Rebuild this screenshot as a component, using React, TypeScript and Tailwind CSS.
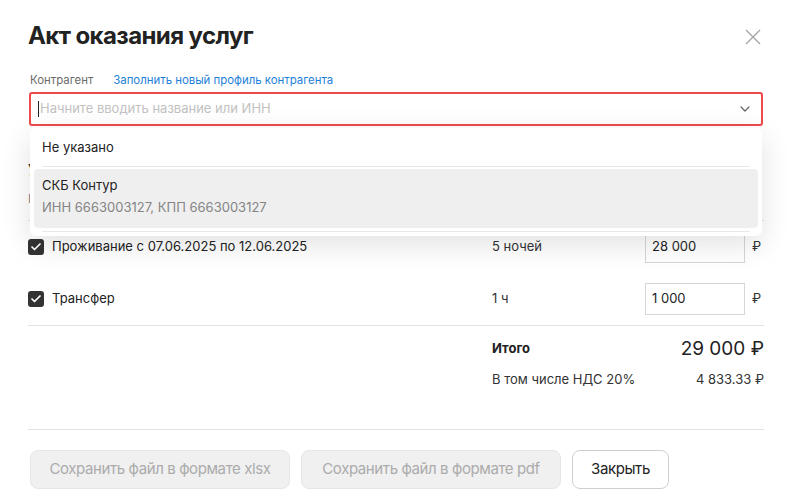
import { ChevronDown, Check } from "lucide-react";

function Checkbox() {
  return (
    <span className="w-4 h-4 rounded-[3px] bg-[#333] flex items-center justify-center shrink-0">
      <Check className="w-3 h-3 text-white" strokeWidth={3.5} />
    </span>
  );
}

function ServiceRow({ name, qty, price }: { name: string; qty: string; price: string }) {
  return (
    <div className="h-[52px] flex items-center">
      <div className="flex items-center gap-2 w-[464px] shrink-0">
        <Checkbox />
        <span className="text-[13px] text-[#222]">{name}</span>
      </div>
      <div className="w-[153px] shrink-0 text-[13px] text-[#333]">{qty}</div>
      <div className="w-[100px] h-[32px] shrink-0 border border-[#d6d6d6] flex items-center px-[6px] text-[13px] text-[#222] bg-white">
        {price}
      </div>
      <span className="ml-[7px] text-[13px] text-[#333]">₽</span>
    </div>
  );
}

export default function App() {
  return (
    <div className="w-[787px] h-[503px] bg-white font-['Inter',sans-serif] text-[#222] overflow-hidden">
      <div className="pl-[28px] pr-[23px] pt-[20px]">
        <div className="flex items-center justify-between">
          <h1 className="text-[24px] leading-[32px] font-bold text-[#222] tracking-[-0.6px]">Акт оказания услуг</h1>
          <svg width="16" height="16" viewBox="0 0 16 16" className="mr-[3px] mt-[2px]">
            <path d="M1 1L15 15M15 1L1 15" stroke="#a6a6a6" strokeWidth="1.4" fill="none" />
          </svg>
        </div>

        <div className="mt-[20px] flex items-center gap-[20px] text-[11.4px] leading-[16px] px-[2px]">
          <span className="text-[#6b6b6b]">Контрагент</span>
          <span className="text-[#1e7fd8]">Заполнить новый профиль контрагента</span>
        </div>

        <div className="relative mt-[4px]">
          <div className="h-[34px] ml-[1px] mr-[1px] border-2 border-[#ef4b4b] rounded-[3px] flex items-center pl-[7px] pr-[8px]">
            <span className="w-px h-[16px] bg-[#222] mr-[1px]" />
            <span className="flex-1 text-[13px] text-[#c2c2c2]">Начните вводить название или ИНН</span>
            <ChevronDown className="w-4 h-4 text-[#666]" strokeWidth={1.8} />
          </div>

          <div className="absolute left-[2px] right-[2px] top-[36px] z-10 bg-white rounded-[6px] shadow-[0_8px_30px_rgba(0,0,0,0.12)] px-[4px] pt-[2px] pb-[4px]">
            <div className="h-[36px] flex items-center px-[8px] text-[13px] text-[#222]">Не указано</div>
            <div className="mx-[8px] h-px bg-[#e8e8e8]" />
            <div className="mt-[2px] h-[59px] rounded-[4px] bg-[#efefef] px-[8px] pt-[7px] flex flex-col gap-[4px]">
              <span className="text-[13px] leading-[18px] text-[#222]">СКБ Контур</span>
              <span className="text-[13px] leading-[18px] text-[#858585]">ИНН 6663003127, КПП 6663003127</span>
            </div>
            <div className="mt-[3px] mx-[8px] h-px bg-[#e8e8e8]" />
          </div>

          <div className="pt-[34px]">
            <div className="text-[16px] leading-[20px] font-semibold text-[#222]">Услуги</div>
            <div className="mt-[11px] flex text-[12px] leading-[16px] text-[#888]">
              <span className="w-[464px]">Наименование</span>
              <span className="w-[153px]">Количество</span>
              <span>Стоимость</span>
            </div>
            <div className="mt-[13px] h-px bg-[#e6e6e6]" />
          </div>
        </div>

        <ServiceRow name="Проживание с 07.06.2025 по 12.06.2025" qty="5 ночей" price="28 000" />
        <ServiceRow name="Трансфер" qty="1 ч" price="1 000" />
        <div className="h-px bg-[#e3e3e3]" />

        <div className="flex items-center h-[44px] pl-[464px] mt-[1px]">
          <span className="flex-1 text-[13px] font-bold text-[#222]">Итого</span>
          <span className="text-[19px] text-[#222]">29 000 ₽</span>
        </div>
        <div className="flex items-center h-[18px] pl-[464px]">
          <span className="flex-1 text-[13px] text-[#333]">В том числе НДС 20%</span>
          <span className="text-[13px] text-[#333]">4 833.33 ₽</span>
        </div>

        <div className="mt-[40px] h-px bg-[#e3e3e3]" />

        <div className="mt-[20px] flex gap-[11px] px-[2px]">
          <button className="h-[39px] w-[260px] rounded-[8px] bg-[#f0f0f0] border border-[#e6e6e6] text-[15px] text-[#ababab] tracking-[-0.4px]">
            Сохранить файл в формате xlsx
          </button>
          <button className="h-[39px] w-[260px] rounded-[8px] bg-[#f0f0f0] border border-[#e6e6e6] text-[15px] text-[#ababab] tracking-[-0.4px]">
            Сохранить файл в формате pdf
          </button>
          <button className="h-[39px] w-[97px] rounded-[8px] bg-white border border-[#cfcfcf] text-[15px] text-[#222] tracking-[-0.4px]">
            Закрыть
          </button>
        </div>
      </div>
    </div>
  );
}
